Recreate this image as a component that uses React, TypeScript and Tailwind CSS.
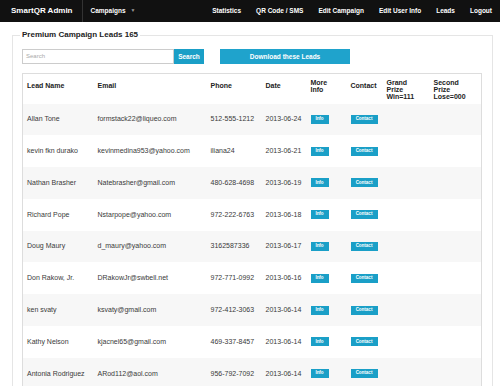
const navItems = ["Statistics", "QR Code / SMS", "Edit Campaign", "Edit User Info", "Leads", "Logout"];

const leads = [
  ["Allan Tone", "formstack22@liqueo.com", "512-555-1212", "2013-06-24"],
  ["kevin fkn durako", "kevinmedina953@yahoo.com", "iliana24", "2013-06-21"],
  ["Nathan Brasher", "Natebrasher@gmail.com", "480-628-4698", "2013-06-19"],
  ["Richard Pope", "Nstarpope@yahoo.com", "972-222-6763", "2013-06-18"],
  ["Doug Maury", "d_maury@yahoo.com", "3162587336", "2013-06-17"],
  ["Don Rakow, Jr.", "DRakowJr@swbell.net", "972-771-0992", "2013-06-16"],
  ["ken svaty", "ksvaty@gmail.com", "972-412-3063", "2013-06-14"],
  ["Kathy Nelson", "kjacnel65@gmail.com", "469-337-8457", "2013-06-14"],
  ["Antonia Rodriguez", "ARod112@aol.com", "956-792-7092", "2013-06-14"],
];

export default function App() {
  return (
    <div className="w-[500px] h-[386px] overflow-hidden bg-white font-['Liberation_Sans',Arial,sans-serif] text-[#3a3a3a]">
      {/* Navbar */}
      <div className="h-[22px] bg-[#111] flex items-center text-white font-bold">
        <div className="pl-[11px] pr-[9px] text-[8px] h-full flex items-center">SmartQR Admin</div>
        <div className="w-px h-full bg-[#333]" />
        <div className="pl-[8px] text-[6.5px] flex items-center gap-[5px]">
          Campaigns
          <span className="text-[#999] text-[5px]">▼</span>
        </div>
        <div className="ml-auto pr-[8px] flex items-center gap-[15px] text-[6.5px]">
          {navItems.map((item) => (
            <span key={item}>{item}</span>
          ))}
        </div>
      </div>

      {/* Leads panel */}
      <fieldset className="mt-[8px] ml-[12px] w-[481px] border border-[#e5e5e5] pl-[7px] pr-[10px]">
        <legend className="px-[2px] text-[8px] leading-[10px] font-bold text-[#222]">
          Premium Campaign Leads 165
        </legend>

        <div className="pl-[2px] pt-[9px] flex items-center">
          <div className="w-[152px] h-[15px] border border-[#ccc] flex items-center pl-[3px] text-[6px] text-[#aaa]">
            Search
          </div>
          <div className="w-[30px] h-[15px] bg-[#1a9fc7] text-white font-bold text-[6.5px] flex items-center justify-center">
            Search
          </div>
          <div className="ml-[16px] w-[130px] h-[15px] bg-[#1fa3cc] text-white font-bold text-[6.5px] flex items-center justify-center">
            Download these Leads
          </div>
        </div>

        <table className="ml-[2px] mt-[9px] w-[459px] table-fixed border-collapse border-l border-t border-r border-[#ddd] text-[7px]">
          <colgroup>
            <col className="w-[71px]" />
            <col className="w-[113px]" />
            <col className="w-[55px]" />
            <col className="w-[45px]" />
            <col className="w-[40px]" />
            <col className="w-[36px]" />
            <col className="w-[47px]" />
            <col className="w-[52px]" />
          </colgroup>
          <thead>
            <tr className="h-[30px] text-left font-bold text-[#222] leading-[7px]">
              <th className="align-top pt-[8px] pl-[4px]">Lead Name</th>
              <th className="align-top pt-[8px] pl-[4px]">Email</th>
              <th className="align-top pt-[8px] pl-[4px]">Phone</th>
              <th className="align-top pt-[8px] pl-[4px]">Date</th>
              <th className="align-top pt-[5px] pl-[4px]">More<br />Info</th>
              <th className="align-top pt-[8px] pl-[4px]">Contact</th>
              <th className="align-top pt-[5px] pl-[4px]">Grand<br />Prize<br />Win=111</th>
              <th className="align-top pt-[5px] pl-[4px]">Second<br />Prize<br />Lose=000</th>
            </tr>
          </thead>
          <tbody>
            {leads.map(([name, email, phone, date], i) => (
              <tr key={name} className={`h-[31.8px] ${i % 2 === 0 ? "bg-[#f7f7f7]" : "bg-white"}`}>
                <td className="pl-[4px] whitespace-nowrap">{name}</td>
                <td className="pl-[4px] whitespace-nowrap">{email}</td>
                <td className="pl-[4px] whitespace-nowrap">{phone}</td>
                <td className="pl-[4px] whitespace-nowrap">{date}</td>
                <td className="pl-[4px]">
                  <div className="w-[18px] h-[9px] bg-[#1a9fc7] text-white font-bold text-[4.5px] flex items-center justify-center">
                    Info
                  </div>
                </td>
                <td className="pl-[4px]">
                  <div className="w-[27px] h-[9px] bg-[#1a9fc7] text-white font-bold text-[4.5px] flex items-center justify-center">
                    Contact
                  </div>
                </td>
                <td />
                <td />
              </tr>
            ))}
          </tbody>
        </table>
      </fieldset>
    </div>
  );
}
